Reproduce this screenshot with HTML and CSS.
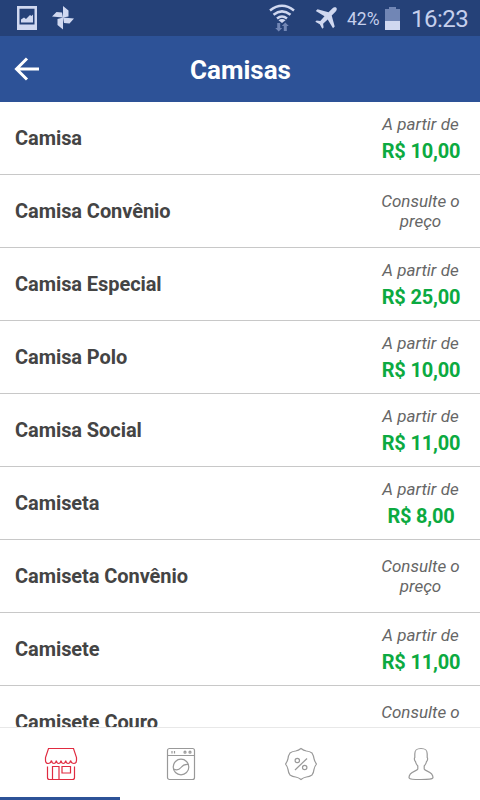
FILE: index.html
```html
<!DOCTYPE html>
<html lang="pt-BR">
<head>
    <meta charset="UTF-8">
    <meta name="viewport" content="width=device-width, initial-scale=1.0">
    <title>Camisas</title>
    <link rel="stylesheet" href="styles.css">
</head>
<body>

<div class="status-bar">
    <svg class="icon-image" width="20" height="24" viewBox="0 0 20 24">
        <path fill-rule="evenodd" d="M0 0h20v24H0zM2.500 2.700v15.800h15V2.700z"/>
        <path d="M4 16.500v-3l3-2 2 1.500 4-4 1.500 1 1.500-1.500v8z"/>
    </svg>
    <svg class="icon-pinwheel" width="22" height="24" viewBox="0 0 22 24">
        <path d="M11 0l5.500 4.500v6L11 11.500zM22 12.500L17.500 17.500l-5.500-.5-1-5.500zM11 23.500l-5.500-4.500v-6L11 11.500zM0 10.500L4.500 6l5.500.5 1 5z"/>
    </svg>
    <svg class="icon-wifi" width="26" height="28" viewBox="0 0 26 28">
        <g fill="none" stroke="#d0d8f0" stroke-width="2.500">
            <path d="M1 6.500q12-9.500 24 0"/>
            <path d="M4.500 10.700q8.500-6.700 17 0"/>
            <path d="M8 14.500q5-4 10 0"/>
        </g>
        <path d="M9.500 16.200q3.500-2.500 7 0L13 19z"/>
        <path class="dim" d="M8.200 19h3v5h2l-3.500 3.500L6.200 24h2zM14.800 27v-5h-2l3.500-3.500 3.500 3.500h-2v5z"/>
    </svg>
    <svg class="icon-plane" width="22" height="22" viewBox="0 0 22 22">
        <path d="M21.300.7c-1-.9-2.800-.4-4 .8L13.500 5.300 2.500 2.300.8 4l8.700 5.300-4.200 4.600-3.700-.5L.3 14.700l4.500 2.500 2.500 4.500 1.300-1.300-.5-3.700 4.600-4.200L18 21.200l1.700-1.700-3-11 3.800-3.800c1.200-1.200 1.700-3 .8-4z"/>
    </svg>
    <span class="battery-text">42%</span>
    <svg class="icon-battery" width="15" height="23" viewBox="0 0 15 23">
        <path class="dim" d="M4 0h7v2h4v12H0V2h4z"/>
        <path d="M0 14h15v9H0z"/>
    </svg>
    <span class="clock">16:23</span>
</div>

<header class="header">
    <svg class="back" width="26" height="26" viewBox="0 0 26 26">
        <path d="M13 2.500L2.500 13 13 23.500M2.500 13H25"/>
    </svg>
    <h1>Camisas</h1>
</header>

<main class="list">
    <div class="item">
        <span class="name">Camisa</span>
        <div class="price"><em>A partir de</em><strong>R$ 10,00</strong></div>
    </div>
    <div class="item">
        <span class="name">Camisa Convênio</span>
        <div class="price"><em>Consulte o preço</em></div>
    </div>
    <div class="item">
        <span class="name">Camisa Especial</span>
        <div class="price"><em>A partir de</em><strong>R$ 25,00</strong></div>
    </div>
    <div class="item">
        <span class="name">Camisa Polo</span>
        <div class="price"><em>A partir de</em><strong>R$ 10,00</strong></div>
    </div>
    <div class="item">
        <span class="name">Camisa Social</span>
        <div class="price"><em>A partir de</em><strong>R$ 11,00</strong></div>
    </div>
    <div class="item">
        <span class="name">Camiseta</span>
        <div class="price"><em>A partir de</em><strong>R$ 8,00</strong></div>
    </div>
    <div class="item">
        <span class="name">Camiseta Convênio</span>
        <div class="price"><em>Consulte o preço</em></div>
    </div>
    <div class="item">
        <span class="name">Camisete</span>
        <div class="price"><em>A partir de</em><strong>R$ 11,00</strong></div>
    </div>
    <div class="item">
        <span class="name">Camisete Couro</span>
        <div class="price"><em>Consulte o preço</em></div>
    </div>
</main>

<nav class="tabs">
    <a class="tab active">
        <svg width="34" height="34" viewBox="0 0 34 34">
            <path d="M4.500 1.500h25l3 9v3c0 4-5 4-6 0-.5 4-4.300 4-4.800 0-.5 4-4.200 4-4.700 0-.5 4-4.200 4-4.700 0-.5 4-4.300 4-4.800 0-1 4-6 4-6 0v-3z"/>
            <path d="M3.500 19.500v11q0 2 2 2h23q2 0 2-2v-11M8.500 32.500v-13h6.500v13M18 19.500h8.500V26H18z"/>
        </svg>
    </a>
    <a class="tab">
        <svg width="34" height="34" viewBox="0 0 34 34">
            <rect x="3.500" y="1.500" width="27" height="31" rx="2"/>
            <path d="M3.500 8.500h27M8 4v2.500M10.500 4v2.500"/>
            <circle cx="21" cy="5.200" r="1"/>
            <circle cx="26" cy="5.200" r="1"/>
            <circle cx="17" cy="20" r="7.800"/>
            <path d="M9.500 22c3 1.500 5.500 1 7.500-1.500s4.500-3.500 7.500-3"/>
        </svg>
    </a>
    <a class="tab">
        <svg width="34" height="34" viewBox="0 0 34 34">
            <path d="M17 1.500Q19.500 3.500 22.400 4Q25.500 4.300 28 6Q29.500 8.500 30 11.600Q30.500 14.500 32.500 17Q30.500 19.500 30 22.400Q29.700 25.500 28 28Q25.500 29.700 22.400 30Q19.500 30.500 17 32.500Q14.500 30.500 11.600 30Q8.500 29.700 6 28Q4.300 25.500 4 22.400Q3.500 19.500 1.500 17Q3.500 14.500 4 11.600Q4.300 8.500 6 6Q8.500 4.300 11.600 4Q14.500 3.500 17 1.500z"/>
            <circle cx="13.300" cy="13.500" r="2.200"/>
            <circle cx="20.700" cy="20.500" r="2.200"/>
            <path d="M11 23L23 11.500"/>
        </svg>
    </a>
    <a class="tab">
        <svg width="34" height="34" viewBox="0 0 34 34">
            <path d="M17 1.500c4.500 0 6.200 1.200 6.200 5.500v3.500c.8.800.3 3.500-.7 4-.4 2.300-1.500 3.700-2.300 4.500v3c1 2.500 8.800 2.200 8.800 8.500 0 2-5 2-12 2s-12 0-12-2C5 24.200 12.800 24.500 13.800 22v-3c-.8-.8-1.900-2.200-2.300-4.500-1-.5-1.500-3.200-.7-4V7c0-4.300 1.700-5.500 6.200-5.500z"/>
        </svg>
    </a>
</nav>

</body>
</html>
```
FILE: styles.css
```css
* {
    box-sizing: border-box;
}

body {
    margin: 0;
    height: 100vh;
    display: flex;
    flex-direction: column;
    overflow: hidden;
    background-color: #fff;
    font-family: Roboto, sans-serif;
}

/* Barra de status */
.status-bar {
    display: flex;
    align-items: center;
    flex-shrink: 0;
    height: 36px;
    padding: 0 12px 0 17px;
    background-color: #254178;
    color: #c5cfec;
}

.status-bar svg {
    flex-shrink: 0;
    fill: #d0d8f0;
}

.status-bar .dim {
    fill: #7186b5;
}

.icon-pinwheel {
    margin: 0 auto 0 15px;
}

.icon-wifi {
    margin-right: 20px;
}

.icon-plane {
    margin-right: 10px;
}

.battery-text {
    width: 33px;
    margin-right: 5px;
    padding-top: 2px;
    font-size: 17.5px;
    white-space: nowrap;
}

.clock {
    width: 57px;
    margin-left: 11px;
    padding-top: 2px;
    font-size: 24px;
    letter-spacing: -0.5px;
}

/* Cabeçalho */
.header {
    display: flex;
    align-items: center;
    flex-shrink: 0;
    height: 66px;
    padding: 0 39px 0 14px;
    background-color: #2d5297;
    color: #fff;
}

.back {
    fill: none;
    stroke: #fff;
    stroke-width: 3;
}

.header h1 {
    flex: 1;
    margin: 2px 0 0;
    font-size: 26px;
    line-height: 30px;
    text-align: center;
}

/* Lista de produtos */
.list {
    flex: 1;
    min-height: 0;
    overflow: hidden;
}

.item {
    display: flex;
    align-items: center;
    justify-content: space-between;
    height: 73px;
    padding: 0 15px;
    border-bottom: 1px solid #c8c8c8;
}

.name {
    font-size: 20px;
    font-weight: bold;
    letter-spacing: -0.07px;
    color: #444;
}

.price {
    width: 89px;
    text-align: center;
    line-height: 20px;
}

.price em {
    display: block;
    font-size: 17px;
    color: #666;
}

.price strong {
    display: block;
    margin-top: 4px;
    padding: 1px 0 0 1px;
    font-size: 20px;
    line-height: 24px;
    letter-spacing: -0.2px;
    white-space: nowrap;
    color: #0caa41;
}

/* Abas */
.tabs {
    display: flex;
    flex-shrink: 0;
    height: 73px;
    border-top: 1px solid #e8e8e8;
}

.tab {
    display: flex;
    flex: 1;
    align-items: center;
    justify-content: center;
    padding-left: 2px;
    border-bottom: 3px solid transparent;
}

.tab.active {
    border-bottom-color: #2d5297;
}

.tab svg {
    margin-top: 3px;
    fill: none;
    stroke: #999;
    stroke-width: 1.200;
}

.tab.active svg {
    stroke: #e02b40;
}
```
